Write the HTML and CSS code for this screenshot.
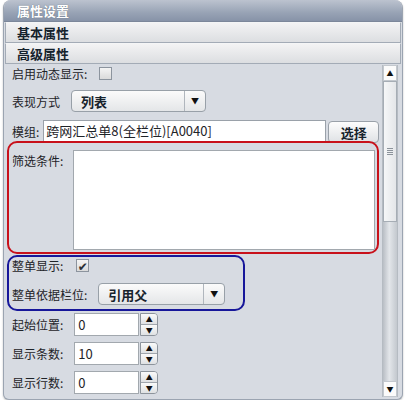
FILE: index.html
```html
<!DOCTYPE html>
<html lang="zh-CN">
<head>
    <meta charset="UTF-8">
    <title>属性设置</title>
    <link rel="stylesheet" href="styles.css">
</head>
<body>
    <div class="panel">
        <div class="panel-head">属性设置</div>
        <div class="section">基本属性</div>
        <div class="section">高级属性</div>
        <div class="panel-body">
            <div class="content">
                <div class="row row-first">
                    <span class="label">启用动态显示:</span>
                    <span class="check check-far"></span>
                </div>
                <div class="row row-select">
                    <span class="label">表现方式</span>
                    <div class="select select-mode">
                        <span class="select-text">列表</span>
                        <span class="select-arrow">&#9660;</span>
                    </div>
                </div>
                <div class="row row-module">
                    <span class="label">模组:</span>
                    <div class="text-input module-input">跨网汇总单8(全栏位)[A0040]</div>
                    <button class="btn">选择</button>
                </div>
                <div class="mark mark-red">
                    <span class="label label-top">筛选条件:</span>
                    <div class="textarea"></div>
                </div>
                <div class="mark mark-blue">
                    <div class="row row-check">
                        <span class="label">整单显示:</span>
                        <span class="check checked">&#10004;</span>
                    </div>
                    <div class="row row-parent">
                        <span class="label">整单依据栏位:</span>
                        <div class="select select-parent">
                            <span class="select-text">引用父</span>
                            <span class="select-arrow">&#9660;</span>
                        </div>
                    </div>
                </div>
                <div class="row row-spin spin-first">
                    <span class="label">起始位置:</span>
                    <div class="spin">
                        <div class="spin-input">0</div>
                        <div class="spin-btns"><span>&#9650;</span><span>&#9660;</span></div>
                    </div>
                </div>
                <div class="row row-spin">
                    <span class="label">显示条数:</span>
                    <div class="spin">
                        <div class="spin-input">10</div>
                        <div class="spin-btns"><span>&#9650;</span><span>&#9660;</span></div>
                    </div>
                </div>
                <div class="row row-spin">
                    <span class="label">显示行数:</span>
                    <div class="spin">
                        <div class="spin-input">0</div>
                        <div class="spin-btns"><span>&#9650;</span><span>&#9660;</span></div>
                    </div>
                </div>
            </div>
            <div class="scrollbar">
                <div class="sb-btn">&#9650;</div>
                <div class="sb-thumb"><span class="grip"></span></div>
                <div class="sb-track"></div>
                <div class="sb-btn">&#9660;</div>
            </div>
        </div>
    </div>
</body>
</html>
```
FILE: styles.css
```css
body {
    margin: 0;
    background: #ffffff;
    font-family: "Noto Sans CJK SC", "DejaVu Sans", sans-serif;
    font-size: 12px;
    color: #1e2328;
}
.panel {
    width: 398px;
    height: 399px;
    margin-left: 3px;
    border: 1px solid #9ba4b1;
    border-top: none;
    border-radius: 8px 8px 6px 6px;
    background: #d7dbe2;
    display: flex;
    flex-direction: column;
    overflow: hidden;
    box-shadow: 0 1px 2px rgba(0, 0, 0, 0.25);
}
.panel-head {
    height: 21px;
    line-height: 21px;
    padding-left: 13px;
    background: linear-gradient(#bcc3cf, #98a3b5 60%, #8793a8);
    color: #fff;
    font-weight: bold;
    font-size: 13px;
    text-shadow: 0 0 1px #55606f;
    border-bottom: 1px solid #7c879a;
}
.section {
    height: 19px;
    line-height: 19px;
    margin: 0 1px;
    padding-left: 11px;
    border: 1px solid #a3abb6;
    border-top: 1px solid #f4f5f6;
    background: linear-gradient(#f3f3f4, #dcdee1);
    font-weight: bold;
    font-size: 13px;
    color: #15222c;
}
.panel-body {
    flex: 1;
    display: flex;
    min-height: 0;
}
.content {
    flex: 1;
    padding-left: 3px;
}
.row {
    display: flex;
    align-items: center;
}
.label {
    margin-left: 5px;
    white-space: nowrap;
}
.row-first {
    height: 14px;
    margin-top: 2px;
}
.check {
    display: inline-block;
    width: 11px;
    height: 11px;
    border: 1px solid #8c949e;
    background: linear-gradient(#f4f4f4, #dadada);
    font-size: 11px;
    line-height: 11px;
    text-align: center;
    color: #333;
}
.check-far {
    margin-left: 12px;
}
.row-select {
    height: 22px;
    margin-top: 10px;
}
.select {
    display: flex;
    align-items: center;
    height: 20px;
    border: 1px solid #98a0a8;
    border-radius: 4px;
    background: linear-gradient(#fbfbfb, #e4e6e8);
}
.select-text {
    flex: 1;
    padding-left: 9px;
    font-weight: bold;
    font-size: 13px;
    color: #17232c;
}
.select-arrow {
    width: 20px;
    height: 20px;
    line-height: 20px;
    border-left: 1px solid #b0b6bd;
    text-align: center;
    font-size: 8px;
    color: #111;
}
.select-mode {
    width: 133px;
    margin-left: 11px;
}
.row-module {
    height: 22px;
    margin-top: 8px;
}
.text-input {
    height: 20px;
    line-height: 20px;
    border: 1px solid #9aa1a9;
    background: #fff;
    font-size: 13px;
    padding-left: 2px;
    white-space: nowrap;
}
.module-input {
    width: 279px;
    margin-left: 4px;
}
.btn {
    width: 51px;
    height: 22px;
    margin-left: 2px;
    margin-top: 2px;
    border: 1px solid #9aa1a9;
    border-radius: 4px;
    background: linear-gradient(#fdfdfd, #dfe2e5);
    font-family: inherit;
    font-weight: bold;
    font-size: 13px;
    color: #17232c;
    padding: 0;
    position: relative;
    z-index: 1;
}
.mark {
    border-radius: 10px;
}
.mark-red {
    position: relative;
    z-index: 2;
    display: flex;
    width: 368px;
    height: 109px;
    margin-top: -1px;
    border: 2px solid #c8111b;
}
.label-top {
    margin-top: 9px;
    margin-left: 3px;
    align-self: flex-start;
}
.textarea {
    width: 300px;
    height: 98px;
    margin-top: 7px;
    margin-left: 10px;
    border: 1px solid #a2a8ae;
    background: #fff;
}
.mark-blue {
    width: 234px;
    height: 52px;
    margin-top: 1px;
    border: 2px solid #17179a;
}
.row-check {
    height: 14px;
    margin-top: 1px;
}
.row-check .label {
    margin-left: 3px;
}
.checked {
    margin-left: 13px;
    font-size: 12px;
    color: #2a2f35;
}
.row-parent {
    height: 22px;
    margin-top: 11px;
}
.row-parent .label {
    margin-left: 3px;
}
.select-parent {
    width: 125px;
    margin-left: 11px;
}
.row-spin {
    height: 23px;
    margin-top: 6px;
}
.spin-first {
    margin-top: 2px;
}
.spin {
    display: flex;
    margin-left: 11px;
}
.spin-input {
    width: 60px;
    height: 21px;
    line-height: 21px;
    padding-left: 3px;
    border: 1px solid #a2a8ae;
    background: #fff;
    font-size: 13px;
}
.spin-btns {
    display: flex;
    flex-direction: column;
    width: 16px;
    height: 21px;
    margin-left: 1px;
    border: 1px solid #8d949c;
    border-radius: 0 4px 4px 0;
    overflow: hidden;
}
.spin-btns span {
    flex: 1;
    font-size: 7px;
    line-height: 10px;
    text-align: center;
    background: linear-gradient(#fafafa, #dfe1e3);
    color: #111;
}
.spin-btns span + span {
    border-top: 1px solid #a0a6ad;
}
.scrollbar {
    width: 14px;
    margin: 1px 4px 2px 0;
    display: flex;
    flex-direction: column;
    border-left: 1px solid #b5bbc2;
    border-right: 1px solid #b5bbc2;
}
.sb-btn {
    height: 14px;
    line-height: 14px;
    text-align: center;
    font-size: 7px;
    background: #fbfbfb;
    border: 1px solid #c3c8ce;
    color: #111;
}
.sb-thumb {
    height: 139px;
    background: linear-gradient(90deg, #f6f7f8, #e4e6e9);
    border: 1px solid #a6adb5;
    display: flex;
    align-items: center;
    justify-content: center;
}
.grip {
    width: 6px;
    height: 8px;
    background: repeating-linear-gradient(#8c939b 0 1px, transparent 1px 2px);
}
.sb-track {
    flex: 1;
    background: linear-gradient(90deg, #b9bec5, #e3e6ea 45%, #c3c8ce);
}
```
